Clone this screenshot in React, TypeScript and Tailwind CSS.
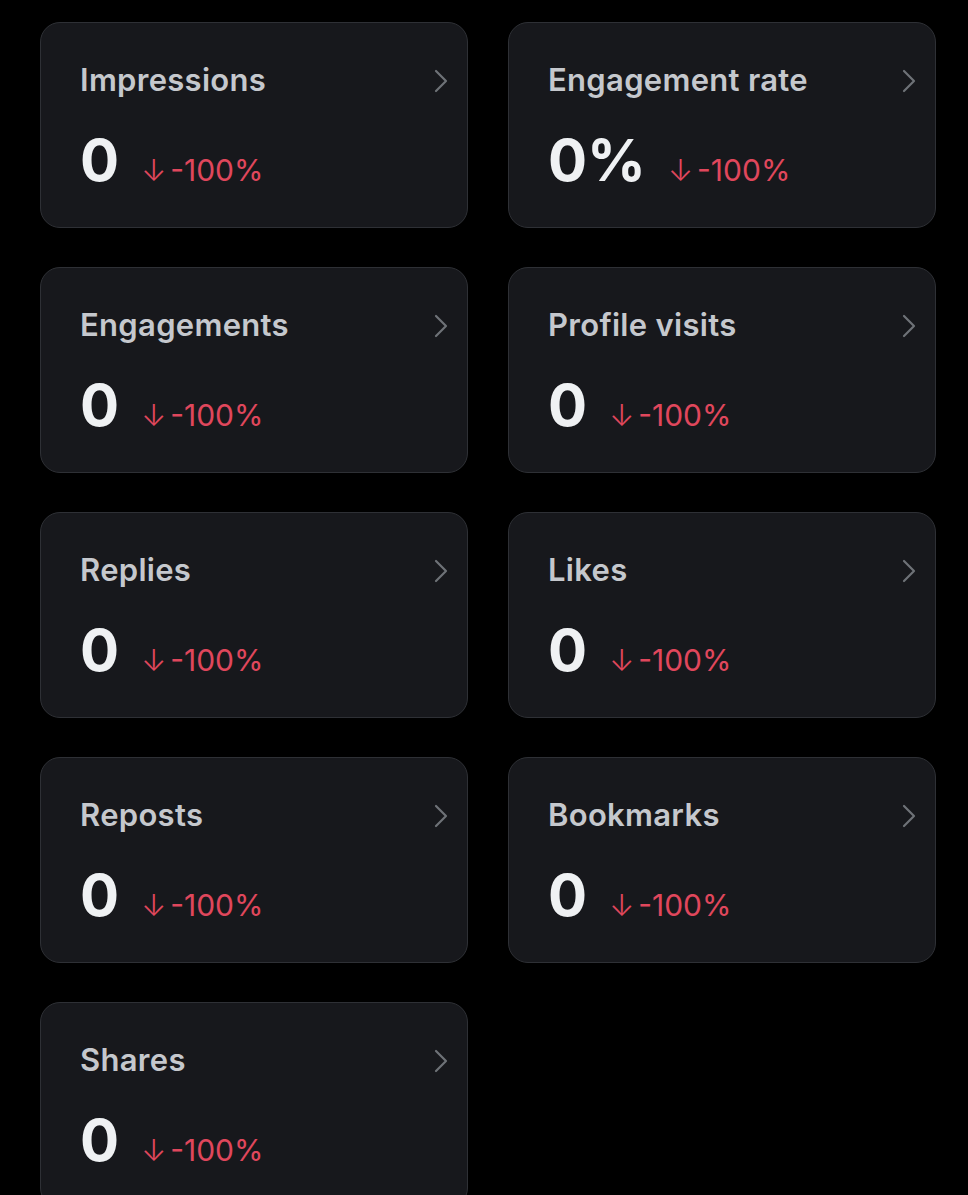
import React from "react";

type Metric = { label: string; value: string; change: string };

const metrics: Metric[] = [
  { label: "Impressions", value: "0", change: "-100%" },
  { label: "Engagement rate", value: "0%", change: "-100%" },
  { label: "Engagements", value: "0", change: "-100%" },
  { label: "Profile visits", value: "0", change: "-100%" },
  { label: "Replies", value: "0", change: "-100%" },
  { label: "Likes", value: "0", change: "-100%" },
  { label: "Reposts", value: "0", change: "-100%" },
  { label: "Bookmarks", value: "0", change: "-100%" },
  { label: "Shares", value: "0", change: "-100%" },
];

function Chevron() {
  return (
    <svg width="18" height="26" viewBox="0 0 18 26" fill="none" className="mt-[1px]">
      <path d="M4 3 L14 13 L4 23" stroke="#6e7277" strokeWidth="2.2" strokeLinecap="round" strokeLinejoin="round" />
    </svg>
  );
}

function MetricCard({ m }: { m: Metric }) {
  return (
    <div className="h-[206px] rounded-[20px] border border-[#2e3035] bg-[#17181c] pl-[39px] pr-[17px] pt-[37px]">
      <div className="flex items-center justify-between">
        <span className="text-[31px] leading-[40px] font-semibold text-[#c5c8cd] tracking-[0.3px]">{m.label}</span>
        <Chevron />
      </div>
      <div className="mt-[25px] flex items-baseline">
        <span className="text-[58px] leading-[70px] font-bold text-[#eff1f3]">{m.value}</span>
        <span className="ml-[22px] text-[30px] font-normal text-[#e0475c]">
          <span className="mr-[4px] font-light">↓</span>
          {m.change}
        </span>
      </div>
    </div>
  );
}

export default function App() {
  return (
    <div
      className="min-h-[1195px] bg-black pl-[40px] pr-[32px] pt-[22px]"
      style={{ fontFamily: "Inter, 'Noto Sans', sans-serif" }}
    >
      <div className="grid grid-cols-2 gap-x-[40px] gap-y-[39px]">
        {metrics.map((m) => (
          <MetricCard key={m.label} m={m} />
        ))}
      </div>
    </div>
  );
}
